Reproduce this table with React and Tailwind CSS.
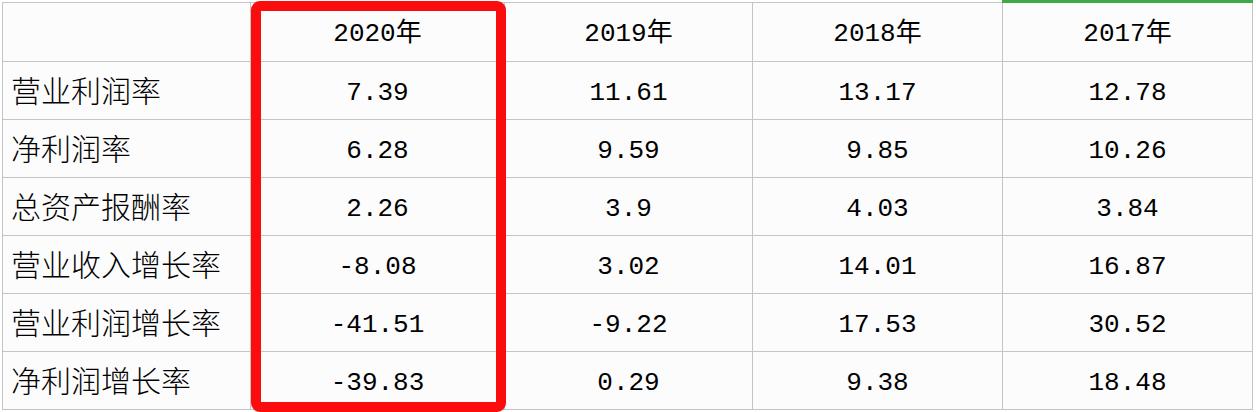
import React from "react";

const headers = ["", "2020年", "2019年", "2018年", "2017年"];
const rows = [
  ["营业利润率", "7.39", "11.61", "13.17", "12.78"],
  ["净利润率", "6.28", "9.59", "9.85", "10.26"],
  ["总资产报酬率", "2.26", "3.9", "4.03", "3.84"],
  ["营业收入增长率", "-8.08", "3.02", "14.01", "16.87"],
  ["营业利润增长率", "-41.51", "-9.22", "17.53", "30.52"],
  ["净利润增长率", "-39.83", "0.29", "9.38", "18.48"],
];

const mono = { fontFamily: '"Liberation Mono", "Noto Sans CJK SC", monospace' };
const cjk = { fontFamily: '"Noto Sans CJK SC", "Noto Sans", sans-serif' };

export default function App() {
  return (
    <div className="relative w-[1256px] h-[412px] overflow-hidden bg-white">
      <div className="ml-[2px] mt-[2px] w-[1251px] border-l border-t border-[#c4c4c4] bg-[#fcfcfd] grid grid-cols-[248px_254px_248px_250px_250px]">
        {headers.map((h, i) => (
          <div
            key={"h" + i}
            className="h-[59px] border-r border-b border-[#c4c4c4] flex items-center justify-center pt-[4px] text-[26px] text-black"
            style={mono}
          >
            {h}
          </div>
        ))}
        {rows.map((r, ri) =>
          r.map((c, ci) =>
            ci === 0 ? (
              <div
                key={ri + "-" + ci}
                className="h-[58px] border-r border-b border-[#c4c4c4] flex items-center pl-[8px] pb-[3px] text-[30px] font-light text-black leading-none"
                style={cjk}
              >
                {c}
              </div>
            ) : (
              <div
                key={ri + "-" + ci}
                className="h-[58px] border-r border-b border-[#c4c4c4] flex items-center justify-center pt-[4px] text-[26px] text-black leading-none"
                style={mono}
              >
                {c}
              </div>
            )
          )
        )}
      </div>
      <div className="absolute left-[1002px] top-0 w-[251px] h-[3px] bg-[#3daa47]" />
      <div className="absolute left-[251px] top-[1px] w-[255px] h-[411px] border-[10px] border-[#fb0d0d] rounded-[9px]" />
    </div>
  );
}
